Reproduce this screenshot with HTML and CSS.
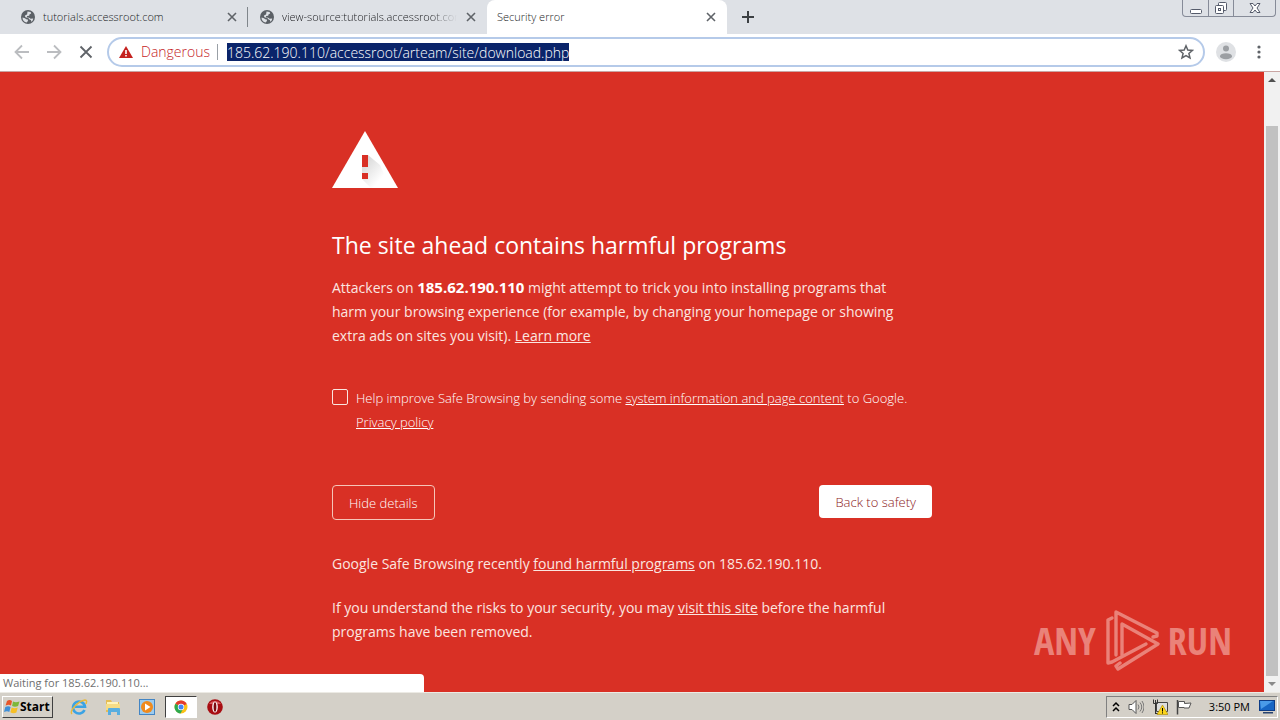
FILE: index.html
```html
<!DOCTYPE html>
<html lang="en">
<head>
<meta charset="utf-8">
<title>Security error</title>
<link rel="stylesheet" href="styles.css">
</head>
<body>
<svg class="defs" aria-hidden="true">
  <symbol id="globe" viewBox="0 0 14 14"><circle cx="7" cy="7" r="7" fill="#5b6066"/><path d="M1.5 7.5 4 8.2l1.2 1 1.6.2.2 1.4-1.2 1.8C3 12 1.300 10 1.500 7.500zM6.500 1.600 9.600 2l.6 1.400-1.600.8-.4 1.500-2 .3-.4 1.200 2.400.6 1.400 1 2.600-.3c-.1 1.500-.9 2.700-1.800 3.300l-.5-1.700-1.700-.8-.8-1.400-2.600-.5-1-1.400.9-1.100 1.400-.3z" fill="#dee1e6"/></symbol>
  <symbol id="cross" viewBox="0 0 10 10"><path d="M1 1l8 8M9 1l-8 8" fill="none" stroke="currentColor" stroke-width="1.600"/></symbol>
</svg>

<header class="tabstrip">
  <nav class="tabs">
    <div class="tab tab-first">
      <svg class="favicon"><use href="#globe"/></svg>
      <span class="tab-title">tutorials.accessroot.com</span>
      <button class="tab-close" aria-label="Close tab"><svg><use href="#cross"/></svg></button>
    </div>
    <div class="tab">
      <svg class="favicon"><use href="#globe"/></svg>
      <span class="tab-title tab-fade">view-source:tutorials.accessroot.com</span>
      <button class="tab-close" aria-label="Close tab"><svg><use href="#cross"/></svg></button>
    </div>
    <div class="tab tab-active">
      <span class="tab-title">Security error</span>
      <button class="tab-close" aria-label="Close tab"><svg><use href="#cross"/></svg></button>
    </div>
    <button class="new-tab" aria-label="New tab"><svg viewBox="0 0 12 12"><path d="M6 0v12M0 6h12" stroke="#3c4043" stroke-width="2"/></svg></button>
  </nav>
  <div class="window-controls">
    <button class="win-min" aria-label="Minimize"><svg viewBox="0 0 14 14"><rect x="1.500" y="8.500" width="11" height="4" rx="1" fill="#fff" stroke="#555b6b"/></svg></button>
    <button class="win-max" aria-label="Restore"><svg viewBox="0 0 14 14"><rect x="4.500" y="1.500" width="8" height="8" rx="1" fill="#fff" stroke="#555b6b"/><rect x="1.500" y="4.500" width="8" height="8" rx="1" fill="#fff" stroke="#555b6b"/><rect x="4.500" y="7.500" width="2" height="2" fill="none" stroke="#555b6b"/></svg></button>
    <button class="win-close" aria-label="Close"><svg viewBox="0 0 14 14"><path d="M2 2.500h3l2 2.500 2-2.500h3L9 7l3 4.500H9L7 9l-2 2.500H2L5 7z" fill="#fff" stroke="#555b6b"/></svg></button>
  </div>
</header>

<div class="toolbar">
  <button class="nav-btn" aria-label="Back"><svg viewBox="0 0 16 16"><path d="M15 8H2M8 1.500 1.500 8 8 14.500" fill="none" stroke="#bbbdc0" stroke-width="1.800"/></svg></button>
  <button class="nav-btn" aria-label="Forward"><svg viewBox="0 0 16 16"><path d="M1 8h13M8 1.500 14.500 8 8 14.500" fill="none" stroke="#bbbdc0" stroke-width="1.800"/></svg></button>
  <button class="nav-btn" aria-label="Stop"><svg viewBox="0 0 16 16"><path d="M2.500 2.500l11 11M13.500 2.500l-11 11" fill="none" stroke="#5f6368" stroke-width="1.800"/></svg></button>
  <div class="omnibox">
    <svg class="danger-icon" viewBox="0 0 14 12"><path d="M7 0 14 12H0z" fill="#c5221f"/><path d="M7 4v4M7 9v1.500" stroke="#fff" stroke-width="1.600"/></svg>
    <span class="danger">Dangerous</span>
    <input class="url" type="text" aria-label="Address" value="185.62.190.110/accessroot/arteam/site/download.php">
    <button class="star" aria-label="Bookmark this page"><svg viewBox="0 0 16 16"><path d="M8 1.800l1.800 4.200 4.600.4-3.500 3 1.100 4.500L8 11.500l-4 2.400 1.100-4.500-3.500-3 4.600-.4z" fill="none" stroke="#5f6368" stroke-width="1.500"/></svg></button>
  </div>
  <button class="avatar" aria-label="Profile"><svg viewBox="0 0 20 20"><circle cx="10" cy="10" r="10" fill="#dfe1e4"/><circle cx="10" cy="6.500" r="3" fill="#9c9fa3"/><ellipse cx="10" cy="14.200" rx="6" ry="3" fill="#9c9fa3"/></svg></button>
  <button class="menu" aria-label="Menu"><svg viewBox="0 0 4 14"><circle cx="2" cy="2" r="1.600" fill="#5f6368"/><circle cx="2" cy="7" r="1.600" fill="#5f6368"/><circle cx="2" cy="12" r="1.600" fill="#5f6368"/></svg></button>
</div>

<div class="viewport">
  <main class="page">
    <div class="interstitial">
      <svg class="warning" viewBox="0 0 66 57"><defs><linearGradient id="shade" x1="0" y1="0" x2="1" y2="1"><stop offset="0" stop-color="#d0d0d0"/><stop offset=".7" stop-color="#fff"/></linearGradient></defs><path d="M33 0 66 57H0z" fill="#fff"/><path d="M36 24l12 10 10 23H39l-9-9h6v-6h-6v-6h6z" fill="url(#shade)"/><path d="M30 24h6v12h-6zM30 42h6v6h-6z" fill="#d93025"/></svg>
      <h1>The site ahead contains harmful programs</h1>
      <p class="lead">Attackers on <strong>185.62.190.110</strong> might attempt to trick you into installing programs that harm your browsing experience (for example, by changing your homepage or showing extra ads on sites you visit). <a href="#">Learn more</a></p>
      <div class="opt-in">
        <input type="checkbox" id="report">
        <label for="report">Help improve Safe Browsing by sending some <a href="#">system information and page content</a> to Google. <a href="#">Privacy policy</a></label>
      </div>
      <div class="actions">
        <button class="details">Hide details</button>
        <button class="safety">Back to safety</button>
      </div>
      <p class="more">Google Safe Browsing recently <a href="#">found harmful programs</a> on 185.62.190.110.</p>
      <p class="more">If you understand the risks to your security, you may <a href="#">visit this site</a> before the harmful programs have been removed.</p>
    </div>
    <div class="status">Waiting for 185.62.190.110...</div>
    <div class="watermark">
      <span>ANY</span>
      <svg viewBox="0 0 56 62"><g fill="none" stroke="currentColor" stroke-width="3.400" stroke-linejoin="round" stroke-linecap="round"><path d="M8 9 4 11v43l4-1 34-18"/><path d="M12 46V3l41 21v3l-4 1"/><path d="M18 46V15l36 20-40 25-2-3 4-3"/></g></svg>
      <span>RUN</span>
    </div>
  </main>
  <div class="scrollbar">
    <svg class="arrow" viewBox="0 0 16 16"><path d="M4 10l4-4 4 4z" fill="#505050"/></svg>
    <div class="thumb"></div>
    <svg class="arrow" viewBox="0 0 16 16"><path d="M4 6l4 4 4-4z" fill="#8a8a8a"/></svg>
  </div>
</div>

<footer class="taskbar">
  <button class="start"><svg viewBox="0 0 16 16"><path d="M3 2c2-1.500 3.500-1 5 0L7 6.600C5.500 5.600 4 5.600 1.600 6.600z" fill="#e8562a"/><path d="M9 2.400c2 1 3.500 1 6.500 0l-1.400 4.600c-2 1-4.200 1-6 0z" fill="#7db73b"/><path d="M1.300 8c2-1 3.700-1 5.300 0l-1.300 5C3.800 12 2.300 12 0 13z" fill="#3f8fd8"/><path d="M7.700 8.400c2 1 3.800 1 6 0L12.400 13.500c-2 1-4.200.8-6-.2z" fill="#f6bf26"/></svg>Start</button>
  <nav class="launch">
    <button class="app" aria-label="Internet Explorer"><svg viewBox="0 0 18 18"><path d="M14.500 12A6 6 0 1 1 15 8.800H5" fill="none" stroke="#3ba3e4" stroke-width="2.600"/><path d="M2 16C-1 13 8 3 15 2c3 0 1 3 1 4" fill="none" stroke="#e9b93a" stroke-width="1.400"/></svg></button>
    <button class="app" aria-label="File Explorer"><svg viewBox="0 0 18 18"><path d="M2 2h5l1 2h7v10H2z" fill="#e5bd55"/><path d="M3 4h11v4H3z" fill="#fff3b8"/><path d="M2 6h14v6H2z" fill="#f5dc85"/><path d="M4 17v-6q0-1 1-1h10q1 0 1 1v6h-3v-3H7v3z" fill="#58aee0"/></svg></button>
    <button class="app" aria-label="Media Player"><svg viewBox="0 0 18 18"><rect x="1.500" y="1.500" width="15" height="15" fill="#9ccbee" stroke="#4385c4"/><circle cx="9" cy="9" r="6" fill="#f08a1c"/><path d="M7 5.500v7L12.500 9z" fill="#fff"/></svg></button>
    <button class="app app-active" aria-label="Chrome"><svg viewBox="0 0 18 18"><circle cx="9" cy="9" r="6.500" fill="#fbc116"/><path d="M9 9 3.400 5.700A6.500 6.500 0 0 1 14.700 6z" fill="#e33b2e"/><path d="M9 9 3.400 5.700A6.500 6.500 0 0 0 8.500 15.500L11 11z" fill="#2da94f"/><circle cx="9" cy="9" r="3.200" fill="#fff"/><circle cx="9" cy="9" r="2.500" fill="#4285f4"/></svg></button>
    <button class="app" aria-label="Opera"><svg viewBox="0 0 18 18"><circle cx="9" cy="9" r="7.800" fill="#a80d12"/><path d="M3 6a7 6 0 0 1 12 0z" fill="#d8595b"/><ellipse cx="9" cy="9" rx="2.800" ry="5.500" fill="#fff"/><ellipse cx="9" cy="9" rx="1.400" ry="4.800" fill="#7c0a0e"/></svg></button>
  </nav>
  <div class="tray">
    <svg class="chevrons" viewBox="0 0 8 12"><path d="M1 5l3-3 3 3M1 10l3-3 3 3" fill="none" stroke="#000" stroke-width="1.500"/></svg>
    <svg class="tray-icon" viewBox="0 0 16 16"><path d="M1 5.500h3l4-4v13l-4-4H1z" fill="#fff" stroke="#555"/><path d="M10 5.500q2 2.500 0 5M12 3.500q3.500 4.500 0 9M14 2q4 6 0 12" fill="none" stroke="#777"/></svg>
    <svg class="tray-icon" viewBox="0 0 16 16"><path d="M4.500 3.500h11v9h-11z" fill="#ddd" stroke="#444"/><path d="M1.500.5v4h4v-4M3.500 1v14M3.500 14.500h6" fill="none" stroke="#333"/><path d="M10.500 6 16 15.500H5z" fill="#fbd51c" stroke="#a88700" stroke-width=".6"/><path d="M10.500 9v3.500M10.500 13.300v1.200" stroke="#000"/></svg>
    <svg class="tray-icon" viewBox="0 0 16 16"><path d="M1.500 1v14.500" stroke="#444" stroke-width="1.500"/><path d="M2.500 2.500h6v2l6.500-.5-2 5H8V8.500H2.500z" fill="#fff" stroke="#555"/></svg>
    <time class="clock">3:50 PM</time>
    <svg class="desktop" viewBox="0 0 16 14"><rect x=".5" y=".5" width="15" height="10" fill="#1766c4" stroke="#0d3c86"/><path d="M1 1h13L2 9z" fill="#4a9be8"/><path d="M4 12h10v1.500H4z" fill="#28436f"/></svg>
  </div>
</footer>
</body>
</html>
```
FILE: styles.css
```css
* { box-sizing: border-box; }
body {
  margin: 0;
  height: 100vh;
  display: flex;
  flex-direction: column;
  overflow: hidden;
  font-family: "Open Sans", "Noto Sans", sans-serif;
}
button {
  padding: 0;
  border: 0;
  background: none;
  font: inherit;
  color: inherit;
  display: flex;
  align-items: center;
  justify-content: center;
}
svg { display: block; flex: none; }
.defs { position: absolute; width: 0; height: 0; }

.tabstrip {
  flex: none;
  height: 34px;
  display: flex;
  justify-content: space-between;
  background: #dee1e6;
  font-size: 11px;
  font-weight: 300;
  color: #202124;
}
.tabs { display: flex; align-items: stretch; }
.tab {
  width: 239px;
  display: flex;
  align-items: center;
  gap: 8px;
  padding: 0 10px 0 12px;
}
.tab-first {
  width: 248px;
  padding-left: 21px;
  background: linear-gradient(#80868b, #80868b) right center / 1px 20px no-repeat;
}
.tab-active { width: 240px; padding-left: 10px; background: #fff; border-radius: 8px 8px 0 0; }
.favicon { width: 14px; height: 14px; }
.tab-title { flex: 1; overflow: hidden; white-space: nowrap; line-height: 16px; }
.tab-fade { mask-image: linear-gradient(to right, #000 85%, transparent); }
.tab-close { width: 12px; height: 34px; color: #5f6368; }
.tab-close svg { width: 10px; height: 10px; }
.new-tab { width: 42px; }
.new-tab svg { width: 12px; height: 12px; }

.window-controls {
  display: flex;
  height: 17px;
  margin-right: 4px;
  border: 1px solid #868b98;
  border-top: 0;
  border-radius: 0 0 4px 4px;
}
.window-controls button + button { border-left: 1px solid #868b98; }
.window-controls svg { width: 14px; height: 14px; }
.win-min, .win-max { width: 25px; }
.win-close { width: 42px; }

.toolbar {
  flex: none;
  height: 38px;
  display: flex;
  align-items: center;
  padding: 0 18px 1px 14px;
  border-bottom: 1px solid #c9a5a3;
  background: #fff;
}
.nav-btn { width: 16px; height: 16px; margin-right: 16px; }
.nav-btn svg { width: 16px; height: 16px; }
.omnibox {
  flex: 1;
  height: 30px;
  margin-left: -3px;
  display: flex;
  align-items: center;
  padding: 0 9px 0 10px;
  border: 2px solid #b5cae9;
  border-radius: 15px;
  font-size: 14px;
  font-weight: 300;
}
.danger-icon { width: 14px; height: 12px; margin-right: 8px; }
.danger { padding-right: 7px; border-right: 1px solid #9aa0a6; line-height: 16px; color: #c5221f; }
.url {
  height: 18px;
  margin-left: 9px;
  padding: 0;
  border: 0;
  outline: 0;
  background: #0a246a;
  color: #fff;
  font: inherit;
  field-sizing: content;
}
.star { margin-left: auto; }
.star svg { width: 16px; height: 16px; }
.avatar { margin-left: 11px; }
.avatar svg { width: 20px; height: 20px; }
.menu { margin-left: 20px; width: 6px; }
.menu svg { width: 4px; height: 14px; }

.viewport { flex: 1; min-height: 0; display: flex; }
.page {
  position: relative;
  flex: 1;
  overflow: hidden;
  background: #d93025;
  color: #fbe6e0;
}
.interstitial {
  max-width: 600px;
  margin: 0 auto;
  padding-top: 59px;
  font-size: 14px;
  line-height: 24px;
}
.warning { width: 66px; height: 57px; }
h1 { margin: 41px 0 14px; font-size: 23px; font-weight: 400; line-height: 32px; color: #fff; }
p { margin: 0; }
a { color: inherit; }
strong { font-size: 15px; color: #fff; }
.lead { max-width: 580px; }
.opt-in { display: flex; gap: 8px; margin-top: 38px; font-size: 13px; font-weight: 300; color: #fff; }
.opt-in input {
  appearance: none;
  flex: none;
  width: 16px;
  height: 16px;
  margin: 3px 0 0;
  border: 1px solid #fbe6e0;
  border-radius: 2px;
}
.actions { display: flex; justify-content: space-between; align-items: flex-start; margin: 51px 0 32px; font-size: 13px; font-weight: 300; }
.details { height: 35px; padding: 0 16px; border: 1px solid #f6c5b8; border-radius: 4px; color: #fff; }
.safety { height: 33px; padding: 0 16px; border-radius: 4px; background: #fff; color: #8c1a22; }
.more + .more { margin-top: 20px; }

.status {
  position: absolute;
  left: 0;
  bottom: 0;
  width: 424px;
  height: 18px;
  padding-left: 3px;
  border-radius: 0 4px 0 0;
  background: #fff;
  color: #6f6f6f;
  font-size: 11px;
  line-height: 18px;
}
.watermark {
  position: absolute;
  right: 32px;
  bottom: 21px;
  display: flex;
  align-items: center;
  gap: 8px;
  color: #ea8279;
  font-family: "Liberation Sans Narrow", "Open Sans Condensed", "Open Sans", sans-serif;
  font-size: 38px;
  line-height: 62px;
}
.watermark svg { width: 56px; height: 62px; }

.scrollbar { width: 16px; display: flex; flex-direction: column; background: #f1f1f1; }
.arrow { width: 16px; height: 16px; }
.thumb { flex: 1; margin: 38px 2px 0; background: #c1c1c1; }

.taskbar {
  flex: none;
  height: 28px;
  display: flex;
  align-items: center;
  padding: 2px;
  border-top: 1px solid #eceae4;
  background: #d4d0c8;
  color: #000;
  font-size: 11px;
}
.start {
  height: 22px;
  padding: 0 2px 0 1px;
  border: 1px solid;
  border-color: #fff #404040 #404040 #fff;
  font-size: 12px;
  font-weight: 700;
}
.start svg { width: 16px; height: 16px; }
.launch { display: flex; gap: 2px; margin-left: 10px; }
.app { width: 32px; height: 22px; border: 1px solid transparent; }
.app svg { width: 18px; height: 18px; }
.app-active { background: #fff; border-color: #404040 #fff #fff #404040; }
.tray {
  height: 22px;
  margin-left: auto;
  display: flex;
  align-items: center;
  gap: 8px;
  padding: 0 2px 0 5px;
  border: 1px solid;
  border-color: #808080 #fff #fff #808080;
}
.chevrons { width: 8px; height: 12px; }
.tray-icon { width: 16px; height: 16px; }
.clock { margin: 0 1px 0 9px; }
.desktop { width: 16px; height: 14px; }
```
